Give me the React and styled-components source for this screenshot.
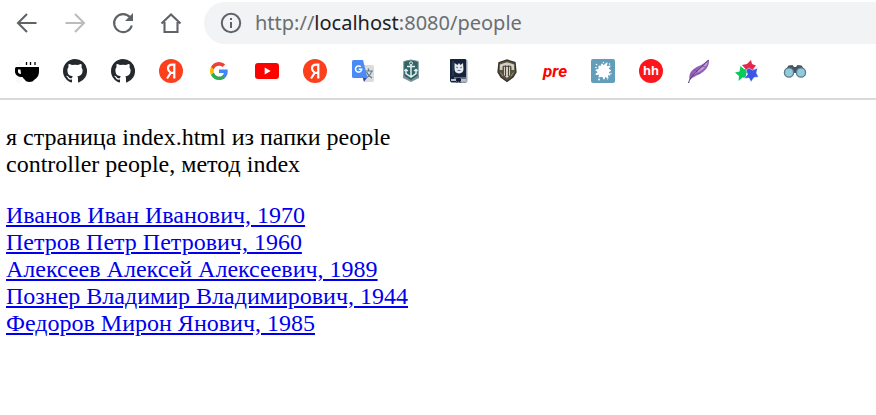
import React from "react";
import styled, { createGlobalStyle } from "styled-components";

const GlobalStyle = createGlobalStyle`
  * { box-sizing: border-box; }
  body { margin: 0; background: #fff; }
`;

const Browser = styled.div`
  display: flex;
  flex-direction: column;
`;

const Toolbar = styled.header`
  display: flex;
  align-items: center;
  gap: 18px;
  padding: 2px 0 0 12px;
`;

const NavButton = styled.button`
  display: flex;
  padding: 0;
  border: 0;
  background: none;
  color: #5f6368;
  &:disabled { color: #babcbe; }
`;

const AddressBar = styled.form`
  flex: 1;
  display: flex;
  align-items: center;
  gap: 12px;
  height: 42px;
  padding-left: 15px;
  border-radius: 21px 0 0 21px;
  background: #f1f3f4;
`;

const Url = styled.a`
  color: #6a6e72;
  font: 20px/30px "Noto Sans", "Open Sans", sans-serif;
  text-decoration: none;
`;

const Host = styled.span`
  color: #202124;
`;

const Bookmarks = styled.nav`
  display: flex;
  align-items: center;
  gap: 24px;
  height: 56px;
  padding: 0 15px;
  border-bottom: 2px solid #dadada;
`;

const Bookmark = styled.a`
  display: flex;
  flex: none;
  text-decoration: none;
`;

const Page = styled.main`
  padding: 24px 6px;
  color: #000;
  font: 24px/27px "Liberation Serif", "Times New Roman", serif;
`;

const Intro = styled.p`
  margin: 0 0 24px;
`;

const People = styled.ul`
  margin: 0;
  padding: 0;
  list-style: none;
`;

const PersonLink = styled.a`
  color: #0000ee;
  text-decoration: underline;
`;

const NavIcon = ({ children }) => (
  <svg width="30" height="30" viewBox="0 0 30 30" fill="none" stroke="currentColor" strokeWidth="2.100" aria-hidden="true">{children}</svg>
);

const Icon = ({ children }) => (
  <svg width="24" height="24" viewBox="0 0 24 24" fill="none" aria-hidden="true">{children}</svg>
);

const Coffee = () => (
  <Icon>
    <path d="M1 6L6 1M3 7L9 1M1 23l6-6M3 24l5-5M1 20l4-4" stroke="#ddd" strokeWidth=".5" />
    <path d="M11.500 3v3M15.500 3v3M20 3v3" stroke="#000" strokeWidth="1.300" />
    <path fillRule="evenodd" fill="#000" d="M1.500 8H24v4c0 5-2 7-5 9-1 2.500-8 2.500-9 0-1-1-2-2-2.500-3C3 18 0 16 0 12.500V9.500Q0 8 1.500 8zM3 10.500v2c0 1.500 1 2.500 3 2.500l-.5-4.500z" />
  </Icon>
);

const GitHub = () => (
  <Icon>
    <path fill="#24292e" d="M12 0C5.400 0 0 5.400 0 12c0 5.300 3.400 9.800 8.200 11.400.6.1.8-.3.8-.6v-2.200c-3.300.7-4-1.400-4-1.400-.6-1.400-1.400-1.800-1.400-1.800-1-.7.1-.7.1-.7 1.200.1 1.900 1.200 1.900 1.200 1 1.900 2.800 1.300 3.500 1 .1-.8.400-1.300.8-1.600-2.700-.3-5.500-1.300-5.500-6 0-1.300.5-2.400 1.200-3.200-.1-.3-.5-1.500.1-3.200 0 0 1-.3 3.300 1.200a11 11 0 0 1 6 0C17.300 4.700 18.300 5 18.300 5c.7 1.700.3 2.900.1 3.200.8.800 1.200 1.900 1.200 3.200 0 4.600-2.800 5.600-5.500 5.900.5.400.9 1.100.9 2.200v3.300c0 .3.2.7.8.6A12 12 0 0 0 12 0z" />
  </Icon>
);

const Yandex = () => (
  <Icon>
    <circle cx="12" cy="12" r="12" fill="#fc3f1d" />
    <path d="M15.300 19.500V5.700h-2c-2.600 0-4.300 1.300-4.300 3.800 0 2 1 3 2.800 4.300L8 19.500M11.500 13.900h4" stroke="#fff" strokeWidth="2.200" />
  </Icon>
);

const Google = () => (
  <Icon>
    <g transform="translate(2.200 2.200) scale(.82)">
      <path fill="#4285f4" d="M22.600 12.300c0-.8-.1-1.600-.2-2.300H12v4.300h5.900a5 5 0 0 1-2.200 3.300v2.800h3.600c2.100-2 3.300-4.800 3.300-8.100z" />
      <path fill="#34a853" d="M12 23c3 0 5.500-1 7.300-2.600l-3.600-2.800A6.600 6.600 0 0 1 5.800 14.100H2.200v2.800A11 11 0 0 0 12 23z" />
      <path fill="#fbbc05" d="M5.800 14.100a6.600 6.600 0 0 1 0-4.200V7H2.200a11 11 0 0 0 0 9.900z" />
      <path fill="#ea4335" d="M12 5.400c1.600 0 3.100.6 4.200 1.600l3.200-3.100A11 11 0 0 0 2.200 7l3.600 2.900A6.600 6.600 0 0 1 12 5.400z" />
    </g>
  </Icon>
);

const YouTube = () => (
  <Icon>
    <rect y="4" width="24" height="16" rx="3" fill="#f00" />
    <path d="M9.700 8.500v7l6-3.500z" fill="#fff" />
  </Icon>
);

const Translate = () => (
  <Icon>
    <path d="M10 6h11q2 0 2 2v13q0 2-2 2h-7z" fill="#dcdcdc" />
    <path d="M14 12h8M17.500 9.500V12M20.500 12c-.5 3-3 5.500-5 6.500M15.500 13c1 2.500 3 4.500 5.500 6" stroke="#607985" strokeWidth="1.200" />
    <path d="M11.500 18h5l-3.500 5z" fill="#3446a8" />
    <path d="M2.500 1H12l4.500 18h-14Q1 19 1 17.500v-15Q1 1 2.500 1z" fill="#4b8bf5" />
    <path d="M9.800 7.800A3.100 3.100 0 1 0 10.700 10.300H7.700" stroke="#fff" strokeWidth="1.500" />
  </Icon>
);

const Warships = () => (
  <Icon>
    <path d="M4.800 2.500Q12-.5 19.200 2.500v15L12 22l-7.200-4.500z" fill="#2d6567" stroke="#748f94" strokeWidth="1" />
    <path d="M4 16l8 5 8-5v3l-8 4-8-4z" fill="#7d9099" />
    <circle cx="12" cy="4.300" r="1.500" stroke="#e4eeee" />
    <path d="M12 6v12M8 7.500h8M7 10.500v4l5 3.500 5-3.500v-4M5.500 12L7 10.500 9 12M18.500 12L17 10.500 15 12" stroke="#e4eeee" strokeWidth="1.500" />
  </Icon>
);

const Book = () => (
  <Icon>
    <path d="M3.500 0H18q1.500 0 1.500 1.500V23.500H5q-2 0-2-2V.5z" fill="#17233b" />
    <path d="M20 1.500v21M9 22.500h11M7 19h12" stroke="#aab5be" strokeWidth="1.200" />
    <path d="M4 20h5v2H4zM14 20h5v2h-5z" fill="#b5c0c8" />
    <path d="M7.500 4l3 2L12 4l1.500 2 2.500-2 .5 6q0 4-4.500 4.500Q7.500 14 7.500 10z" fill="#e5ebef" />
    <path d="M9 8l2 1M15 8l-2 1M10.500 11.500h3" stroke="#67758a" />
    <path d="M6 2v15" stroke="#536175" strokeWidth=".6" />
    <path d="M9.500 19v5l2-1.500 2 1.500v-5z" fill="#101b32" />
  </Icon>
);

const Tanks = () => (
  <Icon>
    <path d="M4 3.500L12 1l8 2.500 1 9.500-3 5-6 4.500L6 18l-3-5z" fill="#57513f" stroke="#35312a" strokeWidth="1.300" />
    <path d="M4.800 11V5.500L12 3.300l7.200 2.200V11h-2.700V7.500H15V16l-3 3-3-3V7.500H7.500V11z" fill="#d2cdc3" />
    <path d="M10.500 6.500V17M13.500 6.500V17M8 7.300h8" stroke="#39342b" strokeWidth=".9" />
    <path d="M5.500 13.500l2.500 3.500M18.500 13.500L16 17" stroke="#9b9280" strokeWidth="1" />
  </Icon>
);

const PreLabel = styled.span`
  width: 24px;
  color: #f00;
  font: italic 700 17px/24px Roboto, sans-serif;
`;

const Splat = () => (
  <Icon>
    <rect width="24" height="24" rx="2" fill="#629eba" />
    <path d="M8 7l2 .5L11 5l1.500 2L16 4l-1 4 4-1-2 3 2.500 1.500L17 13l2 3-3-.5 1 3.500-3-2-1 3-1.500-3L8 18l1-3-4 .5L7.500 13 5 11l3-.5z" fill="#fff" stroke="#fff" strokeWidth="1.100" strokeLinejoin="round" />
    <g fill="#fff"><circle cx="5.500" cy="5.500" r=".8" /><circle cx="12.500" cy="3.500" r=".7" /><circle cx="18.500" cy="5" r=".7" /><circle cx="20" cy="14.500" r=".7" /><circle cx="8" cy="20.500" r=".9" /><circle cx="5" cy="8.500" r=".8" /><circle cx="16.500" cy="20" r=".6" /></g>
  </Icon>
);

const Round = styled.span`
  width: 24px;
  height: 24px;
  border-radius: 50%;
  background: #fc151b;
  color: #fff;
  font: 700 13px/24px "Liberation Sans", Arial, sans-serif;
  text-align: center;
`;

const Feather = () => (
  <Icon>
    <path d="M2.500 21C1 13 7 9 12 7c5-2 6-4 10-6.500C22.500 8 18 12 13 15c-4 2-7 3-10.500 6z" fill="#9161b8" />
    <path d="M3 20C7 13 14 8 21 2c-1 5-4 8-9 11-4 2-6 3-9 7z" fill="#bea0d5" />
    <path d="M1.500 24C3 17 13 10 21.500 1" stroke="#54277e" strokeWidth="1" />
    <path d="M4 15l3 1M7 11l4 1M15 7l4 1M9 14l4 .5" stroke="#7b459f" strokeWidth=".7" />
  </Icon>
);

const Stars = () => (
  <Icon>
    <path d="M16 1l1 4 4 1.500-2.500 3L19 13l-4-1-5 3 .5-5L7 6l5-1z" fill="#e6274b" />
    <path d="M5.500 7L9 10l5 1.500-3 3 .5 4.500-4-.5L3.500 22 4 17 0 13.500l4.500-1z" fill="#08cb5b" />
    <path d="M14 9l3.500 2 5-2-1 5 2 4-4.500.5-3 4.500-2-4-5 .5 3.500-4L11 11z" fill="#3b55e6" stroke="#fff" strokeWidth=".5" />
  </Icon>
);

const Binoculars = () => (
  <Icon>
    <path d="M1.500 12L5.500 6.500 9.500 6l1.500 2h2l1.500-2 4 .5 4 5.500-7 5-2.500-3h-2l-2.500 3z" fill="#46545f" />
    <circle cx="6" cy="13.500" r="4.600" fill="#8fcbdc" stroke="#5b7986" strokeWidth="1.300" />
    <circle cx="18" cy="13.500" r="4.600" fill="#8fcbdc" stroke="#5b7986" strokeWidth="1.300" />
  </Icon>
);

const bookmarks = [
  ["Coffee", <Coffee />],
  ["GitHub", <GitHub />],
  ["GitHub", <GitHub />],
  ["Яндекс", <Yandex />],
  ["Google", <Google />],
  ["YouTube", <YouTube />],
  ["Яндекс", <Yandex />],
  ["Google Translate", <Translate />],
  ["World of Warships", <Warships />],
  ["Book", <Book />],
  ["World of Tanks", <Tanks />],
  ["pre", <PreLabel>pre</PreLabel>],
  ["Splat", <Splat />],
  ["hh", <Round>hh</Round>],
  ["Feather", <Feather />],
  ["Stars", <Stars />],
  ["Binoculars", <Binoculars />],
];

const people = [
  "Иванов Иван Иванович, 1970",
  "Петров Петр Петрович, 1960",
  "Алексеев Алексей Алексеевич, 1989",
  "Познер Владимир Владимирович, 1944",
  "Федоров Мирон Янович, 1985",
];

export default function App() {
  return (
    <Browser>
      <GlobalStyle />
      <Toolbar>
        <NavButton aria-label="Back"><NavIcon><path d="M24.500 15H6.500M15 6l-9 9 9 9" /></NavIcon></NavButton>
        <NavButton aria-label="Forward" disabled><NavIcon><path d="M5.500 15h18M15 6l9 9-9 9" /></NavIcon></NavButton>
        <NavButton aria-label="Reload"><NavIcon><path d="M22 9.300A9 9 0 1 0 23.800 17.500" /><path d="M25 5v8h-8z" fill="currentColor" stroke="none" /></NavIcon></NavButton>
        <NavButton aria-label="Home"><NavIcon><path d="M5.500 15.500L15 6.500l9.500 9M8.500 14v10h13V14" /></NavIcon></NavButton>
        <AddressBar>
          <Icon>
            <circle cx="12" cy="12" r="9.200" stroke="#5f6368" strokeWidth="2" />
            <path d="M12 11v6M12 7v2" stroke="#5f6368" strokeWidth="2" />
          </Icon>
          <Url href="#people">http://<Host>localhost</Host>:8080/people</Url>
        </AddressBar>
      </Toolbar>
      <Bookmarks aria-label="Bookmarks">
        {bookmarks.map(([name, icon], i) => (
          <Bookmark key={i} href="#bookmark" aria-label={name}>{icon}</Bookmark>
        ))}
      </Bookmarks>
      <Page>
        <Intro>я страница index.html из папки people<br />controller people, метод index</Intro>
        <People>
          {people.map((person) => (
            <li key={person}><PersonLink href="#person">{person}</PersonLink></li>
          ))}
        </People>
      </Page>
    </Browser>
  );
}
